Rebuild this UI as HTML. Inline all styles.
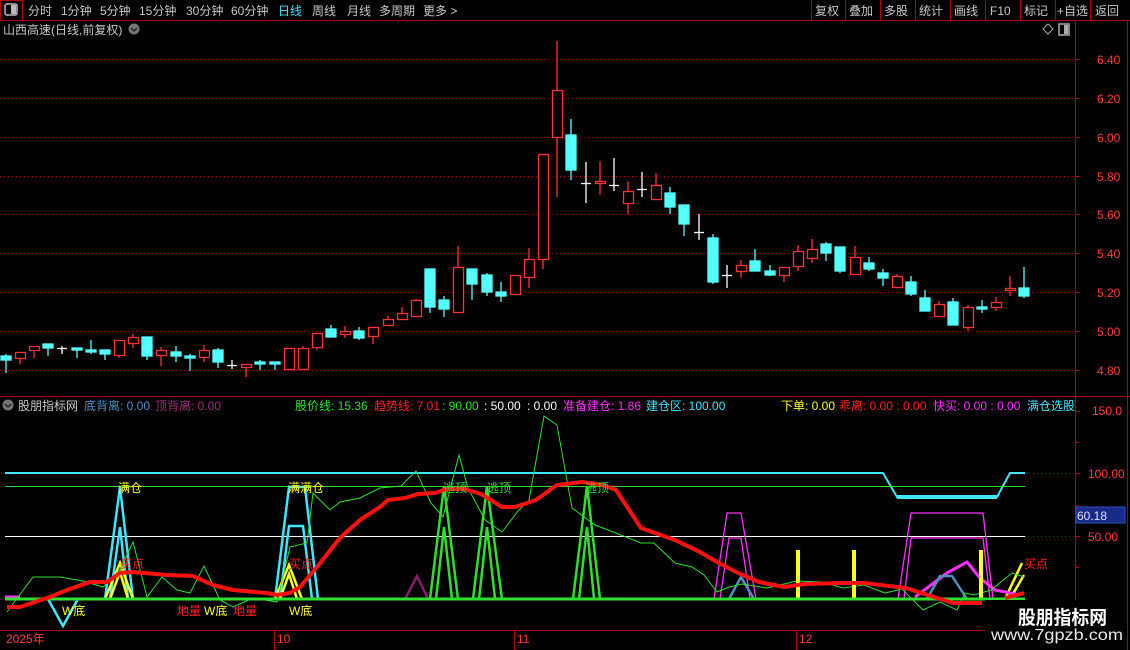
<!DOCTYPE html>
<html><head><meta charset="utf-8"><style>
html,body{margin:0;padding:0;background:#000;width:1130px;height:650px;overflow:hidden}
svg{display:block;font-family:"Liberation Sans","Noto Sans CJK SC",sans-serif}
</style></head><body>
<svg width="1130" height="650" viewBox="0 0 1130 650" xmlns="http://www.w3.org/2000/svg">
<rect width="1130" height="650" fill="#000"/>
<line x1="0" y1="20.5" x2="1130" y2="20.5" stroke="#b00000"/>
<rect x="0.5" y="0.5" width="22" height="20" fill="none" stroke="#b00000"/>
<rect x="5" y="4" width="12" height="11" rx="2" fill="none" stroke="#bbb" stroke-width="1.5"/><rect x="11" y="5" width="5" height="9" fill="#bbb"/>
<g font-size="12" fill="#c8c8c8">
<text x="28" y="15">分时</text><text x="61" y="15">1分钟</text><text x="100" y="15">5分钟</text><text x="139" y="15">15分钟</text><text x="186" y="15">30分钟</text><text x="231" y="15">60分钟</text><text x="278" y="15" fill="#3ee6ff">日线</text><text x="312" y="15">周线</text><text x="347" y="15">月线</text><text x="379" y="15">多周期</text><text x="423" y="15">更多 &gt;</text>
<text x="815" y="15">复权</text><text x="849" y="15">叠加</text><text x="884" y="15">多股</text><text x="919" y="15">统计</text><text x="954" y="15">画线</text><text x="990" y="15">F10</text><text x="1024" y="15">标记</text><text x="1057" y="15">+自选</text><text x="1095" y="15">返回</text>
</g>
<g stroke="#b00000"><line x1="811.5" y1="0" x2="811.5" y2="20"/><line x1="845.5" y1="0" x2="845.5" y2="20"/><line x1="880.5" y1="0" x2="880.5" y2="20"/><line x1="915.5" y1="0" x2="915.5" y2="20"/><line x1="950.5" y1="0" x2="950.5" y2="20"/><line x1="985.5" y1="0" x2="985.5" y2="20"/><line x1="1020.5" y1="0" x2="1020.5" y2="20"/><line x1="1055.5" y1="0" x2="1055.5" y2="20"/><line x1="1090.5" y1="0" x2="1090.5" y2="20"/></g>
<text x="3" y="34" font-size="12" fill="#c8c8c8">山西高速(日线,前复权)</text>
<circle cx="134" cy="29" r="5.5" fill="#777"/><path d="M131 28l3 3 3-3" stroke="#222" stroke-width="1.5" fill="none"/>
<path d="M1048 24l5 5-5 5-5-5z" fill="none" stroke="#aaa"/>
<rect x="1059" y="24" width="10" height="11" fill="none" stroke="#aaa" stroke-width="1.5"/><rect x="1064" y="25" width="4" height="9" fill="#aaa"/>
<line x1="1075.5" y1="20" x2="1075.5" y2="630" stroke="#b00000"/>
<line x1="1127.5" y1="20" x2="1127.5" y2="650" stroke="#b00000"/>
<g stroke="#8a0000" stroke-dasharray="1 3">
<line x1="0" y1="59.5" x2="1075" y2="59.5"/><line x1="0" y1="98.5" x2="1075" y2="98.5"/><line x1="0" y1="137.5" x2="1075" y2="137.5"/><line x1="0" y1="176.5" x2="1075" y2="176.5"/><line x1="0" y1="214.5" x2="1075" y2="214.5"/><line x1="0" y1="253.5" x2="1075" y2="253.5"/><line x1="0" y1="292.5" x2="1075" y2="292.5"/><line x1="0" y1="331.5" x2="1075" y2="331.5"/><line x1="0" y1="370.5" x2="1075" y2="370.5"/>
</g>
<g font-size="12" fill="#ff3c3c">
<text x="1097" y="64">6.40</text><text x="1097" y="103">6.20</text><text x="1097" y="142">6.00</text><text x="1097" y="181">5.80</text><text x="1097" y="219">5.60</text><text x="1097" y="258">5.40</text><text x="1097" y="297">5.20</text><text x="1097" y="336">5.00</text><text x="1097" y="375">4.80</text>
</g>
<g stroke="#b00000"><line x1="1075" y1="59.5" x2="1080" y2="59.5"/><line x1="1075" y1="98.5" x2="1080" y2="98.5"/><line x1="1075" y1="137.5" x2="1080" y2="137.5"/><line x1="1075" y1="176.5" x2="1080" y2="176.5"/><line x1="1075" y1="214.5" x2="1080" y2="214.5"/><line x1="1075" y1="253.5" x2="1080" y2="253.5"/><line x1="1075" y1="292.5" x2="1080" y2="292.5"/><line x1="1075" y1="331.5" x2="1080" y2="331.5"/><line x1="1075" y1="370.5" x2="1080" y2="370.5"/></g>
<g stroke-width="1.3">
<g stroke="#54ffff" fill="#54ffff">
<line x1="6" y1="354" x2="6" y2="373"/><rect x="1" y="356" width="10" height="4"/>
<line x1="48" y1="344" x2="48" y2="356"/><rect x="43" y="344" width="10" height="4"/>
<line x1="77" y1="348" x2="77" y2="358"/><rect x="72" y="348" width="10" height="2"/>
<line x1="91" y1="340" x2="91" y2="354"/><rect x="86" y="350" width="10" height="2"/>
<line x1="105" y1="350" x2="105" y2="360"/><rect x="100" y="350" width="10" height="4"/>
<line x1="147" y1="337" x2="147" y2="360"/><rect x="142" y="337" width="10" height="19"/>
<line x1="176" y1="346" x2="176" y2="362"/><rect x="171" y="352" width="10" height="4"/>
<line x1="190" y1="354" x2="190" y2="371"/><rect x="185" y="356" width="10" height="2"/>
<line x1="218" y1="348" x2="218" y2="368"/><rect x="213" y="350" width="10" height="12"/>
<line x1="260" y1="360" x2="260" y2="370"/><rect x="255" y="362" width="10" height="2"/>
<line x1="275" y1="362" x2="275" y2="370"/><rect x="270" y="362" width="10" height="2"/>
<line x1="331" y1="325" x2="331" y2="337"/><rect x="326" y="329" width="10" height="8"/>
<line x1="359" y1="327" x2="359" y2="340"/><rect x="354" y="331" width="10" height="7"/>
<line x1="430" y1="269" x2="430" y2="313"/><rect x="425" y="269" width="10" height="38"/>
<line x1="444" y1="296" x2="444" y2="317"/><rect x="439" y="300" width="10" height="9"/>
<line x1="472" y1="269" x2="472" y2="300"/><rect x="467" y="269" width="10" height="15"/>
<line x1="487" y1="273" x2="487" y2="296"/><rect x="482" y="275" width="10" height="17"/>
<line x1="501" y1="282" x2="501" y2="302"/><rect x="496" y="292" width="10" height="4"/>
<line x1="571" y1="119" x2="571" y2="180"/><rect x="566" y="135" width="10" height="35"/>
<line x1="670" y1="187" x2="670" y2="214"/><rect x="665" y="193" width="10" height="14"/>
<line x1="684" y1="205" x2="684" y2="236"/><rect x="679" y="205" width="10" height="19"/>
<line x1="713" y1="234" x2="713" y2="284"/><rect x="708" y="238" width="10" height="44"/>
<line x1="755" y1="249" x2="755" y2="271"/><rect x="750" y="261" width="10" height="10"/>
<line x1="770" y1="265" x2="770" y2="276"/><rect x="765" y="271" width="10" height="4"/>
<line x1="826" y1="242" x2="826" y2="261"/><rect x="821" y="244" width="10" height="9"/>
<line x1="840" y1="247" x2="840" y2="273"/><rect x="835" y="247" width="10" height="24"/>
<line x1="869" y1="257" x2="869" y2="271"/><rect x="864" y="263" width="10" height="6"/>
<line x1="883" y1="269" x2="883" y2="286"/><rect x="878" y="273" width="10" height="5"/>
<line x1="911" y1="276" x2="911" y2="296"/><rect x="906" y="282" width="10" height="12"/>
<line x1="925" y1="290" x2="925" y2="311"/><rect x="920" y="298" width="10" height="13"/>
<line x1="953" y1="298" x2="953" y2="325"/><rect x="948" y="302" width="10" height="23"/>
<line x1="982" y1="300" x2="982" y2="313"/><rect x="977" y="307" width="10" height="2"/>
<line x1="1024" y1="267" x2="1024" y2="298"/><rect x="1019" y="288" width="10" height="8"/>
</g>
<g stroke="#ff3232" fill="#000">
<line x1="20" y1="358" x2="20" y2="364"/><rect x="15.5" y="352.5" width="10" height="6"/>
<line x1="34" y1="350" x2="34" y2="358"/><rect x="29.5" y="346.5" width="10" height="4"/>
<line x1="119" y1="355" x2="119" y2="358"/><rect x="114.5" y="340.5" width="10" height="15"/>
<line x1="133" y1="334" x2="133" y2="348"/><rect x="128.5" y="337.5" width="10" height="6"/>
<line x1="161" y1="347" x2="161" y2="366"/><rect x="156.5" y="350.5" width="10" height="5"/>
<line x1="204" y1="345" x2="204" y2="362"/><rect x="199.5" y="350.5" width="10" height="7"/>
<line x1="246" y1="364" x2="246" y2="377"/><rect x="241.5" y="364.5" width="10" height="3"/>
<rect x="284.5" y="348.5" width="10" height="21"/>
<line x1="303" y1="346" x2="303" y2="350"/><rect x="298.5" y="348.5" width="10" height="21"/>
<line x1="317" y1="347" x2="317" y2="350"/><rect x="312.5" y="333.5" width="10" height="14"/>
<line x1="345" y1="326" x2="345" y2="338"/><rect x="340.5" y="331.5" width="10" height="3"/>
<line x1="373" y1="336" x2="373" y2="344"/><rect x="368.5" y="327.5" width="10" height="9"/>
<line x1="388" y1="316" x2="388" y2="319"/><rect x="383.5" y="319.5" width="10" height="6"/>
<line x1="402" y1="307" x2="402" y2="313"/><rect x="397.5" y="313.5" width="10" height="6"/>
<line x1="416" y1="299" x2="416" y2="301"/><rect x="411.5" y="300.5" width="10" height="16"/>
<line x1="458" y1="246" x2="458" y2="267"/><rect x="453.5" y="267.5" width="10" height="45"/>
<rect x="510.5" y="275.5" width="10" height="19"/>
<line x1="529" y1="248" x2="529" y2="288"/><rect x="524.5" y="259.5" width="10" height="18"/>
<line x1="543" y1="259" x2="543" y2="269"/><rect x="538.5" y="154.5" width="10" height="105"/>
<line x1="557" y1="41" x2="557" y2="197"/><rect x="552.5" y="90.5" width="10" height="47"/>
<line x1="600" y1="161" x2="600" y2="195"/><rect x="595.5" y="181.5" width="10" height="2"/>
<line x1="628" y1="181" x2="628" y2="214"/><rect x="623.5" y="191.5" width="10" height="12"/>
<line x1="656" y1="173" x2="656" y2="185"/><rect x="651.5" y="185.5" width="10" height="14"/>
<line x1="741" y1="260" x2="741" y2="278"/><rect x="736.5" y="265.5" width="10" height="6"/>
<line x1="784" y1="275" x2="784" y2="282"/><rect x="779.5" y="267.5" width="10" height="8"/>
<line x1="798" y1="245" x2="798" y2="271"/><rect x="793.5" y="251.5" width="10" height="15"/>
<line x1="812" y1="239" x2="812" y2="263"/><rect x="807.5" y="249.5" width="10" height="9"/>
<line x1="855" y1="246" x2="855" y2="275"/><rect x="850.5" y="257.5" width="10" height="17"/>
<line x1="897" y1="274" x2="897" y2="276"/><rect x="892.5" y="276.5" width="10" height="11"/>
<line x1="939" y1="301" x2="939" y2="317"/><rect x="934.5" y="304.5" width="10" height="12"/>
<line x1="968" y1="305" x2="968" y2="331"/><rect x="963.5" y="307.5" width="10" height="20"/>
<line x1="996" y1="297" x2="996" y2="311"/><rect x="991.5" y="302.5" width="10" height="5"/>
<line x1="1010" y1="276" x2="1010" y2="296"/><rect x="1005.5" y="288.5" width="10" height="2"/>
</g>
<g stroke="#fff">
<line x1="62" y1="346" x2="62" y2="354"/><line x1="57" y1="348.5" x2="67" y2="348.5"/>
<line x1="232" y1="360" x2="232" y2="369"/><line x1="227" y1="365.5" x2="237" y2="365.5"/>
<line x1="586" y1="162" x2="586" y2="203"/><line x1="581" y1="183.5" x2="591" y2="183.5"/>
<line x1="614" y1="158" x2="614" y2="191"/><line x1="609" y1="185.5" x2="619" y2="185.5"/>
<line x1="642" y1="172" x2="642" y2="197"/><line x1="637" y1="189.5" x2="647" y2="189.5"/>
<line x1="699" y1="214" x2="699" y2="240"/><line x1="694" y1="232.5" x2="704" y2="232.5"/>
<line x1="727" y1="265" x2="727" y2="288"/><line x1="722" y1="275.5" x2="732" y2="275.5"/>
</g>
</g>
<line x1="0" y1="396.5" x2="1130" y2="396.5" stroke="#b00000"/>
<circle cx="8" cy="405" r="5.5" fill="#777"/><path d="M5 404l3 3 3-3" stroke="#222" stroke-width="1.5" fill="none"/>
<g font-size="12">
<text x="18" y="410" fill="#c8c8c8">股朋指标网</text>
<text x="84" y="410" fill="#4f8fbf">底背离: 0.00</text>
<text x="155" y="410" fill="#a0307a">顶背离: 0.00</text>
<text x="295" y="410" fill="#2ee02e">股价线: 15.36</text>
<text x="374" y="410" fill="#ff2020">趋势线: 7.01</text>
<text x="442" y="410" fill="#2ee02e">: 90.00</text>
<text x="484" y="410" fill="#fff">: 50.00</text>
<text x="527" y="410" fill="#fff">: 0.00</text>
<text x="563" y="410" fill="#ff30ff">准备建仓: 1.86</text>
<text x="646" y="410" fill="#3ee6ff">建仓区: 100.00</text>
<text x="781" y="410" fill="#ffff20">下单: 0.00</text>
<text x="839" y="410" fill="#ff2020">乖离: 0.00 : 0.00</text>
<text x="933" y="410" fill="#ff30ff">快买: 0.00 : 0.00</text>
<text x="1027" y="410" fill="#3ee6ff">满仓选股</text>
</g>
<g font-size="12" fill="#ff3c3c"><text x="1092" y="415">150.0</text><text x="1088" y="478">100.00</text><text x="1088" y="541">50.00</text></g>
<g stroke="#b00000"><line x1="1075" y1="411.5" x2="1080" y2="411.5"/><line x1="1075" y1="442.5" x2="1079" y2="442.5"/><line x1="1075" y1="473.5" x2="1080" y2="473.5"/><line x1="1075" y1="505.5" x2="1079" y2="505.5"/><line x1="1075" y1="536.5" x2="1080" y2="536.5"/><line x1="1075" y1="567.5" x2="1079" y2="567.5"/></g>
<rect x="1076" y="507" width="49" height="16" fill="#1a2a88" stroke="#3050c0"/>
<text x="1077" y="520" font-size="12" fill="#e0e0ff">60.18</text>
<polyline points="5,473 883,473 897,497 997,497 1010,473 1025,473" fill="none" stroke="#3ee6ff" stroke-width="2"/>
<line x1="897" y1="497" x2="997" y2="497" stroke="#3ee6ff" stroke-width="4"/>
<line x1="5" y1="486.5" x2="1025" y2="486.5" stroke="#2ee02e"/>
<line x1="5" y1="536.5" x2="1025" y2="536.5" stroke="#fff"/>
<line x1="1025" y1="473.5" x2="1075" y2="473.5" stroke="#8a0000" stroke-dasharray="1 3"/>
<line x1="1025" y1="536.5" x2="1075" y2="536.5" stroke="#8a0000" stroke-dasharray="1 3"/>
<g fill="none" stroke="#3ee6ff" stroke-width="2.5">
<polyline points="105,599 120,487 133,599"/><polyline points="110,599 120,527 128,599"/>
<polyline points="275,599 289,487 305,487 318,599"/><polyline points="280,599 289,526 303,526 312,599"/>
<polyline points="48,599 63,626 78,599"/>
</g>
<g fill="none" stroke="#ffff20" stroke-width="2.5">
<polyline points="105,599 120,563 133,599"/><polyline points="110,599 120,572 128,599"/>
<polyline points="275,599 289,565 302,599"/><polyline points="280,599 289,574 297,599"/>
<polyline points="1005,599 1022,563"/><polyline points="1010,599 1024,575"/>
</g>
<g fill="none" stroke="#2ee02e" stroke-width="2.5">
<polyline points="430,599 444,486 458,599"/><polyline points="436,599 444,527 452,599"/>
<polyline points="473,599 487,486 502,599"/><polyline points="479,599 487,527 495,599"/>
<polyline points="573,599 587,486 600,599"/><polyline points="579,599 587,527 594,599"/>
</g>
<g fill="none" stroke="#ff30ff" stroke-width="1.3">
<polyline points="714,599 727,513 741,513 756,599"/><polyline points="720,599 729,538 741,538 750,599"/>
<polyline points="898,599 911,513 983,513 993,599"/><polyline points="904,599 911,538 983,538 990,599"/>
</g>
<polyline points="915,597 947,573 967,562 980,578 995,590 1020,595" fill="none" stroke="#ff30ff" stroke-width="3"/>
<g fill="none" stroke="#4f8fbf" stroke-width="2.5">
<polyline points="729,599 741,577 754,599"/><polyline points="927,599 940,576 952,576 967,599"/>
</g>
<polyline points="405,599 417,576 428,599" fill="none" stroke="#8b1a6b" stroke-width="2.5"/>
<polyline points="5,597 20,597" stroke="#ff30ff" stroke-width="3"/>
<polyline points="7,612 33,577 60,577 83,581 103,587 120,570 133,542 147,597 162,577 177,590 190,593 204,566 220,600 233,607 253,598 277,602 290,547 307,543 313,493 330,510 340,502 360,498 380,488 401,486 416,471 431,503 443,517 459,455 468,488 485,520 502,532 519,510 529,500 544,416 557,425 572,508 595,525 616,533 641,543 654,543 675,563 692,567 704,575 717,592 729,587 742,584 767,588 797,581 822,582 843,588 864,585 885,593 902,589 923,610 940,602 957,610 965,593 974,595 991,590 1012,573 1024,577" fill="none" stroke="#2ee02e" stroke-width="1"/>
<g fill="#ffff20"><rect x="796" y="550" width="4" height="49"/><rect x="852" y="550" width="4" height="49"/><rect x="979" y="550" width="4" height="49"/></g>
<line x1="5" y1="599" x2="1025" y2="599" stroke="#2ee02e" stroke-width="3"/>
<polyline points="7,607 20,607 50,597 67,590 90,582 107,582 120,573 133,572 167,575 193,576 213,585 233,590 267,593 277,595 290,593 300,587 317,567 340,538 360,520 380,507 388,500 405,498 418,494 435,493 447,489 464,489 481,494 502,507 515,507 536,500 557,485 582,482 603,485 616,490 641,528 675,540 700,552 717,562 738,573 759,582 784,587 805,584 843,583 864,583 906,588 940,599 953,603 982,603" fill="none" stroke="#ff1010" stroke-width="4"/>
<polyline points="1005,598 1024,593" stroke="#ff1010" stroke-width="4"/>
<g font-size="12">
<text x="118" y="492" fill="#ffff20">满仓</text><text x="288" y="492" fill="#ffff20">满满仓</text>
<text x="443" y="492" fill="#2ee02e">逃顶</text><text x="487" y="492" fill="#2ee02e">逃顶</text><text x="585" y="492" fill="#2ee02e">逃顶</text>
<text x="120" y="568" fill="#ff2020">买点</text><text x="289" y="568" fill="#ff2020">买点</text><text x="1024" y="568" fill="#ff2020">买点</text>
<text x="62" y="615" fill="#ffff20">W底</text><text x="204" y="615" fill="#ffff20">W底</text><text x="289" y="615" fill="#ffff20">W底</text>
<text x="177" y="615" fill="#ff2020">地量</text><text x="233" y="615" fill="#ff2020">地量</text>
</g>
<line x1="0" y1="630.5" x2="1075" y2="630.5" stroke="#b00000"/>
<g stroke="#b00000"><line x1="274.5" y1="630" x2="274.5" y2="650"/><line x1="514.5" y1="630" x2="514.5" y2="650"/><line x1="796.5" y1="630" x2="796.5" y2="650"/></g>
<g font-size="12" fill="#ff3c3c"><text x="6" y="643">2025年</text><text x="277" y="643">10</text><text x="517" y="643">11</text><text x="799" y="643">12</text></g>
<rect x="985" y="600" width="142" height="50" fill="#000"/>
<text x="1018" y="624" font-size="19" font-weight="bold" fill="#fff" textLength="89" lengthAdjust="spacingAndGlyphs">股朋指标网</text>
<text x="991" y="640" font-size="16" fill="#e8e8e8" textLength="132" lengthAdjust="spacingAndGlyphs">www.7gpzb.com</text>
</svg>
</body></html>
